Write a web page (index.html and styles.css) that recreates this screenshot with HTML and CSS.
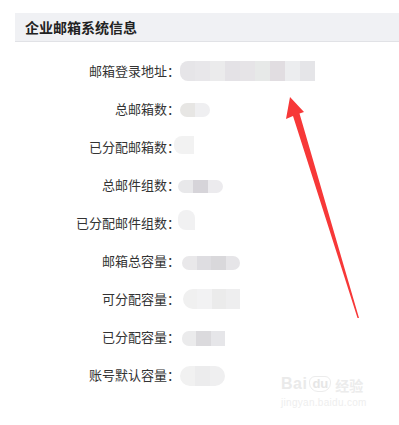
FILE: index.html
```html
<!DOCTYPE html>
<html lang="zh-CN">
<head>
<meta charset="utf-8">
<title>企业邮箱系统信息</title>
<link rel="stylesheet" href="styles.css">
</head>
<body>
<div class="page">
  <div class="header">企业邮箱系统信息</div>
  <div class="rows">
    <div class="row"><div class="label">邮箱登录地址：</div><div class="val v1"><span></span><span></span><span></span><span></span><span></span><span></span><span></span><span></span><span></span></div></div>
    <div class="row"><div class="label">总邮箱数：</div><div class="val v2"><span></span><span></span></div></div>
    <div class="row"><div class="label">已分配邮箱数：</div><div class="val v3"><span></span></div></div>
    <div class="row"><div class="label">总邮件组数：</div><div class="val v4"><span></span><span></span><span></span></div></div>
    <div class="row"><div class="label">已分配邮件组数：</div><div class="val v5"><span></span></div></div>
    <div class="row"><div class="label">邮箱总容量：</div><div class="val v6"><span></span><span></span><span></span><span></span></div></div>
    <div class="row"><div class="label">可分配容量：</div><div class="val v7"><span></span><span></span><span></span><span></span></div></div>
    <div class="row"><div class="label">已分配容量：</div><div class="val v8"><span></span><span></span><span></span></div></div>
    <div class="row"><div class="label">账号默认容量：</div><div class="val v9"><span></span><span></span><span></span></div></div>
  </div>
</div>
<svg class="arrow" width="399" height="425" viewBox="0 0 399 425">
  <polygon points="290,97 304,112 299.5,113.5 359,318 357.5,318 293,116 286,119" fill="#f73838"/>
</svg>
<div class="watermark">
  <div class="wm-top"><span class="wm-bai">Bai</span><span class="wm-du">du</span><span class="wm-jy">经验</span></div>
  <div class="wm-url">jingyan.baidu.com</div>
</div>
</body>
</html>
```
FILE: styles.css
```css
html, body {
  margin: 0;
  padding: 0;
  background: #ffffff;
}
body {
  width: 399px;
  height: 425px;
  overflow: hidden;
  position: relative;
  font-family: "Noto Sans CJK SC", "Noto Sans", sans-serif;
  color: #333;
}
.page {
  padding-top: 13px;
}
.header {
  margin-left: 15px;
  height: 28px;
  line-height: 28px;
  padding-left: 10px;
  background: #f0f1f4;
  border-bottom: 1px solid #e1e2e6;
  font-size: 14px;
  font-weight: bold;
  color: #222;
}
.rows {
  margin-top: 10px;
}
.row {
  display: flex;
  align-items: center;
  height: 38px;
}
.label {
  width: 180px;
  text-align: right;
  font-size: 13px;
  line-height: 16px;
  color: #333;
  flex: none;
}
.val {
  display: flex;
  overflow: hidden;
  filter: blur(0.6px);
}
.val span {
  flex: 1;
  height: 100%;
}
.v1 { width: 135px; height: 20px; border-radius: 8px 0 0 8px; margin-top: 0; }
.v1 span:nth-child(1) { background: #e6e5e8; }
.v1 span:nth-child(2) { background: #e8e7ea; }
.v1 span:nth-child(3) { background: #ebebec; }
.v1 span:nth-child(4) { background: #e4e2e6; }
.v1 span:nth-child(5) { background: #e6e4e7; }
.v1 span:nth-child(6) { background: #e7e9e8; }
.v1 span:nth-child(7) { background: #e1dde1; }
.v1 span:nth-child(8) { background: #ecedef; }
.v1 span:nth-child(9) { background: #e5e5e8; }

.v2 { width: 30px; height: 14px; border-radius: 7px; margin-top: 2px; }
.v2 span:nth-child(1) { background: #e7e6e4; }
.v2 span:nth-child(2) { background: #efeff1; }

.v3 { width: 20px; height: 18px; border-radius: 8px 0 0 8px; margin-left: -6px; margin-top: -4px; }
.v3 span { background: #f2f2f2; }

.v4 { width: 45px; height: 13px; border-radius: 7px; margin-left: -2px; margin-top: 3px; }
.v4 span:nth-child(1) { background: #e8e8ea; }
.v4 span:nth-child(2) { background: #d6d4d9; }
.v4 span:nth-child(3) { background: #ecebee; }

.v5 { width: 17px; height: 20px; border-radius: 8px 8px 0 8px; margin-left: -2px; margin-top: -6px; }
.v5 span { background: #f1f1f2; }

.v6 { width: 58px; height: 14px; border-radius: 7px; margin-left: 2px; margin-top: 3px; }
.v6 span:nth-child(1) { background: #e9e8ea; }
.v6 span:nth-child(2) { background: #dedde1; }
.v6 span:nth-child(3) { background: #d9d8db; }
.v6 span:nth-child(4) { background: #e6e5e8; }

.v7 { width: 57px; height: 20px; border-radius: 10px 0 0 10px; margin-left: 3px; margin-top: 0; }
.v7 span:nth-child(1) { background: #f0f0f0; }
.v7 span:nth-child(2) { background: #f2f2f3; }
.v7 span:nth-child(3) { background: #ebebeb; }
.v7 span:nth-child(4) { background: #eeeeef; }

.v8 { width: 43px; height: 15px; border-radius: 7px 0 0 7px; margin-left: 2px; margin-top: 2px; }
.v8 span:nth-child(1) { background: #ebebec; }
.v8 span:nth-child(2) { background: #dbdadd; }
.v8 span:nth-child(3) { background: #e6e6e9; }

.v9 { width: 45px; height: 20px; border-radius: 10px; margin-top: 2px; }
.v9 span:nth-child(1) { background: #f1f1f1; }
.v9 span:nth-child(2) { background: #ececed; }
.v9 span:nth-child(3) { background: #efeff0; }

.arrow {
  position: absolute;
  left: 0;
  top: 0;
  pointer-events: none;
}
.watermark {
  position: absolute;
  left: 281px;
  top: 376px;
  color: #ececec;
  font-family: "Liberation Sans", sans-serif;
  line-height: 1;
}
.wm-top {
  display: flex;
  align-items: flex-end;
  gap: 2px;
}
.wm-bai {
  font-size: 16px;
  font-weight: bold;
  letter-spacing: 0.5px;
  color: #eaeaea;
}
.wm-du {
  font-size: 13px;
  font-weight: bold;
  color: #e6e6e6;
  border: 1.5px solid #ececec;
  border-radius: 6px 6px 9px 9px;
  padding: 0 2px 1px;
}
.wm-jy {
  font-family: "Noto Sans CJK SC", sans-serif;
  font-size: 14px;
  font-weight: bold;
  color: #ececec;
  margin-left: 2px;
}
.wm-url {
  font-size: 10px;
  margin-top: 6px;
  color: #eeeeee;
  letter-spacing: 0.3px;
}
```
